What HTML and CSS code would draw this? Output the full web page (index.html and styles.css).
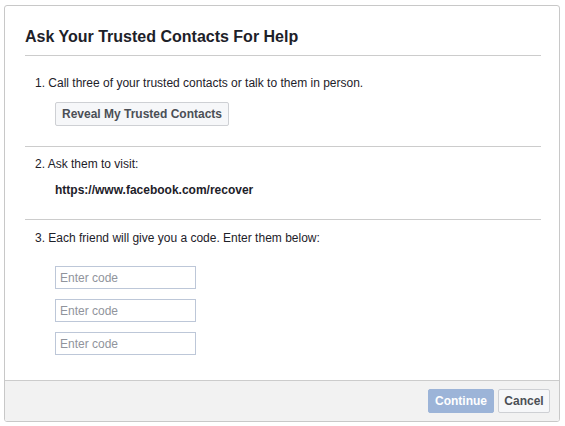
FILE: index.html
```html
<!DOCTYPE html>
<html>
<head>
<meta charset="utf-8">
<link rel="stylesheet" href="styles.css">
</head>
<body>
<div class="card">
  <div class="content">
    <h2 class="title">Ask Your Trusted Contacts For Help</h2>
    <div class="section s1">
      <div class="step">1. Call three of your trusted contacts or talk to them in person.</div>
      <div class="indent"><button class="btn reveal">Reveal My Trusted Contacts</button></div>
    </div>
    <div class="section s2">
      <div class="step">2. Ask them to visit:</div>
      <div class="indent url">https://www.facebook.com/recover</div>
    </div>
    <div class="section s3">
      <div class="step">3. Each friend will give you a code. Enter them below:</div>
      <div class="indent inputs">
        <input class="code" type="text" placeholder="Enter code">
        <input class="code" type="text" placeholder="Enter code">
        <input class="code" type="text" placeholder="Enter code">
      </div>
    </div>
  </div>
  <div class="footer">
    <button class="btn primary">Continue</button>
    <button class="btn cancel">Cancel</button>
  </div>
</div>
</body>
</html>
```

FILE: styles.css
```css
html, body {
  margin: 0;
  padding: 0;
  background: #fff;
}
body {
  padding: 5px 0 0 4px;
  font-family: "Liberation Sans", Arial, Helvetica, sans-serif;
  font-size: 12px;
  line-height: 16px;
  color: #1d2129;
}
.card {
  width: 556px;
  box-sizing: border-box;
  border: 1px solid #c8c8c8;
  border-radius: 3px;
  overflow: hidden;
  background: #fff;
}
.content {
  padding: 21px 18px 0 20px;
}
.title {
  margin: 0;
  font-size: 16px;
  line-height: 20px;
  font-weight: bold;
  color: #1d2129;
  padding-bottom: 8px;
  border-bottom: 1px solid #cccccc;
}
.section {
  padding-left: 10px;
}
.step {
  height: 16px;
  white-space: nowrap;
}
.s1 {
  padding-top: 19px;
  padding-bottom: 20px;
  border-bottom: 1px solid #cccccc;
}
.s2 {
  padding-top: 9px;
  padding-bottom: 21px;
  border-bottom: 1px solid #cccccc;
}
.s3 {
  padding-top: 10px;
  padding-bottom: 25px;
}
.indent {
  padding-left: 20px;
}
.s1 .indent {
  margin-top: 11px;
  height: 24px;
}
.url {
  margin-top: 10px;
  height: 16px;
  font-weight: bold;
}
.inputs {
  margin-top: 20px;
  display: flex;
  flex-direction: column;
  gap: 10px;
  align-items: flex-start;
}
.code {
  display: block;
  width: 141px;
  height: 23px;
  box-sizing: border-box;
  margin: 0;
  border: 1px solid #bdc7d8;
  padding: 0 4px;
  font-family: "Liberation Sans", Arial, Helvetica, sans-serif;
  font-size: 12px;
  color: #1d2129;
  outline: none;
}
.code::placeholder {
  color: #90949c;
}
.btn {
  display: block;
  height: 24px;
  box-sizing: border-box;
  margin: 0;
  padding: 0;
  border: 1px solid #ced0d4;
  border-radius: 2px;
  background: #f6f7f9;
  color: #4b4f56;
  font-family: "Liberation Sans", Arial, Helvetica, sans-serif;
  font-size: 12px;
  font-weight: bold;
  line-height: 22px;
  white-space: nowrap;
  text-align: center;
}
.reveal {
  width: 174px;
}
.footer {
  display: flex;
  justify-content: flex-end;
  gap: 4px;
  padding: 8px 9px 8px;
  background: #f2f2f2;
  border-top: 1px solid #cccccc;
}
.primary {
  width: 66px;
  background: #9cb4d8;
  border-color: #9cb4d8;
  color: #fff;
}
.cancel {
  width: 52px;
}
```
